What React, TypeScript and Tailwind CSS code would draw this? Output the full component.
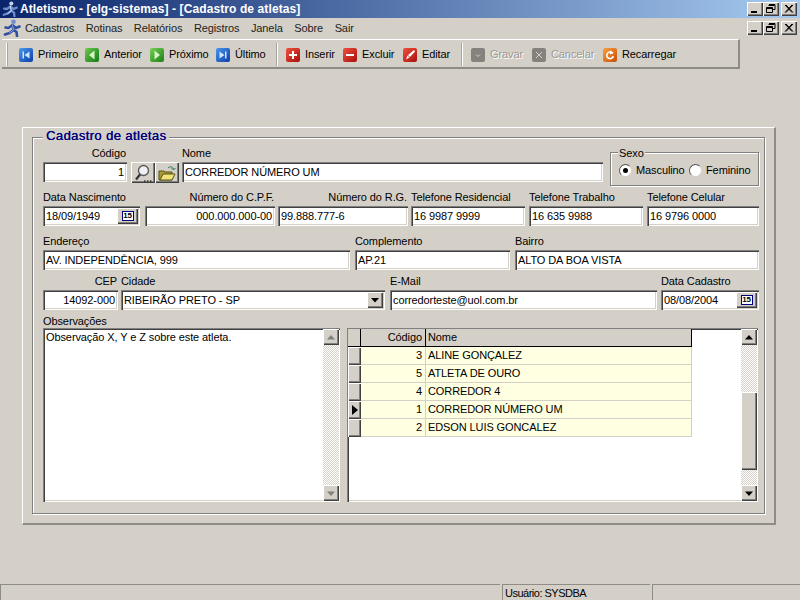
import type { ReactNode } from "react";

const sunken =
  "bg-white shadow-[inset_1px_1px_0_#808080,inset_2px_2px_0_#404040,inset_-1px_-1px_0_#ffffff,inset_-2px_-2px_0_#d4d0c8]";
const raised =
  "bg-[#d4d0c8] shadow-[inset_1px_1px_0_#ffffff,inset_-1px_-1px_0_#404040,inset_-2px_-2px_0_#808080]";
const etched = "border border-[#808080] shadow-[1px_1px_0_#ffffff,inset_1px_1px_0_#ffffff]";

function Runner({ className, light }: { className: string; light?: boolean }) {
  return (
    <svg viewBox="0 0 18 18" className={className}>
      <path d="M9.500 6 5.500 9 2.500 8.500M9.500 6l1 5-4 3-4.500 1.500M10.500 11l3 2 .5 4M10 6.500l3 2.500 3.500-1.500" fill="none" stroke={light ? "#6f8ccb" : "#2f4f9e"} strokeWidth="2.600" strokeLinecap="round" />
      <path d="M9.500 6l1 5-4 3" fill="none" stroke={light ? "#dbe4f4" : "#8ea6d8"} strokeWidth="1" strokeLinecap="round" />
      <circle cx="10.500" cy="2.800" r="2.300" fill={light ? "#c4d2ec" : "#6f8ccb"} />
    </svg>
  );
}

function WinBtn({ kind }: { kind: "min" | "max" | "close" }) {
  return (
    <div className={`w-4 h-3.5 flex items-center justify-center ${raised}`}>
      <svg viewBox="0 0 12 10" className="w-3 h-2.5">
        {kind === "min" && <rect x="2" y="7" width="6" height="2" fill="#000" />}
        {kind === "max" && (
          <path d="M4 .5h6v5H8M3.500 1.500h6M1.500 3.500h6v5h-6zM1.500 4.500h6" fill="none" stroke="#000" />
        )}
        {kind === "close" && <path d="M2 1l7 7.500M3 1l7 7.500M9 1 2 8.500M10 1 3 8.500" stroke="#000" />}
      </svg>
    </div>
  );
}

type ToolIcon = "first" | "prev" | "next" | "last" | "plus" | "minus" | "edit" | "save" | "cancel" | "reload";

const iconColors: Record<ToolIcon, string> = {
  first: "bg-[linear-gradient(135deg,#4a98ec,#0a3ea8)]",
  prev: "bg-[linear-gradient(135deg,#6cc850,#137a16)]",
  next: "bg-[linear-gradient(135deg,#78cf54,#1b8018)]",
  last: "bg-[linear-gradient(135deg,#4a98ec,#0a3ea8)]",
  plus: "bg-[linear-gradient(135deg,#f0503e,#a80f0c)]",
  minus: "bg-[linear-gradient(135deg,#f0503e,#a80f0c)]",
  edit: "bg-[linear-gradient(135deg,#f0503e,#a80f0c)]",
  save: "bg-[#85827e]",
  cancel: "bg-[#85827e]",
  reload: "bg-[linear-gradient(135deg,#f8a040,#c94e08)]",
};

function IconGlyph({ icon }: { icon: ToolIcon }) {
  switch (icon) {
    case "first":
      return <path d="M3.500 3.500h1.500v7H3.500zM10.500 3.500v7L5.500 7z" fill="#cfe4fb" />;
    case "prev":
      return <path d="M9.500 2.500v9L4 7z" fill="#d8f5c8" />;
    case "next":
      return <path d="M4.500 2.500v9L10 7z" fill="#d8f5c8" />;
    case "last":
      return <path d="M10.500 3.500H9v7h1.500zM3.500 3.500v7L8.500 7z" fill="#cfe4fb" />;
    case "plus":
      return <path d="M6 3h2v3h3v2H8v3H6V8H3V6h3z" fill="#fff" />;
    case "minus":
      return <path d="M3 6h8v2H3z" fill="#fff" />;
    case "edit":
      return <path d="M11 2 12 3.500 7 9 5 7zM4.500 7.500l2 2-3.500 2z" fill="#fff" />;
    case "save":
      return <path d="M5 6.500 7 8.500 9 6.500" fill="none" stroke="#d4d0c8" />;
    case "cancel":
      return <path d="M4 4l6 6M10 4l-6 6" stroke="#d4d0c8" />;
    case "reload":
      return (
        <>
          <path d="M9.800 5.500A3.300 3.300 0 1 0 10.300 8" fill="none" stroke="#fff" strokeWidth="1.600" />
          <path d="M7 2.500l3.500 2.300-3.500 1.700z" fill="#fff" />
        </>
      );
  }
}

function ToolButton({ icon, label, width, disabled }: { icon: ToolIcon; label: string; width: string; disabled?: boolean }) {
  return (
    <div className={`flex items-center gap-[5px] shrink-0 ${width}`}>
      <div className={`w-[14px] h-[14px] rounded-[2px] ${iconColors[icon]}`}>
        <svg viewBox="0 0 14 14" className="w-[14px] h-[14px]">
          <IconGlyph icon={icon} />
        </svg>
      </div>
      <span className={disabled ? "text-[#9b9892] [text-shadow:1px_1px_0_#ffffff]" : "text-black"}>{label}</span>
    </div>
  );
}

function Sep() {
  return <div className="w-[2px] h-[23px] mr-[8px] bg-[#a8a59e] border-r border-white shrink-0" />;
}

function Field({ label, value, width, alignRight, labelRight, children }: {
  label?: string;
  value: string;
  width: string;
  alignRight?: boolean;
  labelRight?: boolean;
  children?: ReactNode;
}) {
  return (
    <div className={`flex flex-col shrink-0 ${width}`}>
      <div className={`h-4 leading-[14px] whitespace-nowrap ${labelRight ? "text-right pr-px" : ""}`}>{label}</div>
      <div className={`h-5 flex items-center pl-[3px] pr-[3px] ${sunken}`}>
        <span className={`flex-1 whitespace-nowrap overflow-hidden ${alignRight ? "text-right" : ""}`}>{value}</span>
        {children}
      </div>
    </div>
  );
}

function CalButton() {
  return (
    <div className={`w-[21px] h-4 -mr-[1px] flex items-center justify-center shrink-0 ${raised}`}>
      <div className="w-[12px] h-[10px] border border-[#000080] bg-white text-[8px] leading-[8px] text-center font-bold">15</div>
    </div>
  );
}

function ScrollArrow({ up, dim }: { up?: boolean; dim?: boolean }) {
  return (
    <div className={`w-4 h-4 shrink-0 flex items-center justify-center ${raised}`}>
      <svg viewBox="0 0 8 5" className="w-2 h-[5px]">
        <path d={up ? "M4 0 8 4.500H0z" : "M4 5 8 .5H0z"} fill={dim ? "#808080" : "#000"} />
      </svg>
    </div>
  );
}

const dither =
  "bg-[#e8e6e2] bg-[repeating-conic-gradient(#d4d0c8_0_25%,#ffffff_0_50%)] bg-[length:2px_2px]";

const rows = [
  { code: 3, name: "ALINE GONÇALEZ" },
  { code: 5, name: "ATLETA DE OURO" },
  { code: 4, name: "CORREDOR 4" },
  { code: 1, name: "CORREDOR NÚMERO UM", current: true },
  { code: 2, name: "EDSON LUIS GONCALEZ" },
];

export default function App() {
  return (
    <div className="w-[800px] h-[600px] overflow-hidden flex flex-col bg-[#d4d0c8] text-black text-[11px] tracking-[-0.1px] font-['Liberation_Sans',Arial,sans-serif]">
      {/* title bar */}
      <div className="h-[18px] shrink-0 flex items-center bg-[linear-gradient(90deg,#0a246a,#a6caf0)] pr-[3px]">
        <Runner className="w-4 h-4 ml-[2px] mr-[2px]" light />
        <span className="text-white font-bold text-[12px] tracking-[0.1px] flex-1">
          Atletismo - [elg-sistemas] - [Cadastro de atletas]
        </span>
        <WinBtn kind="min" />
        <WinBtn kind="max" />
        <div className="w-[2px]" />
        <WinBtn kind="close" />
      </div>

      {/* menu */}
      <div className="h-[20px] shrink-0 flex items-center pr-[3px]">
        <Runner className="w-[18px] h-[18px] ml-[3px] mr-[4px]" />
        <div className="flex-1 flex gap-[11.500px] text-[#222]">
          <span>Cadastros</span>
          <span>Rotinas</span>
          <span>Relatórios</span>
          <span>Registros</span>
          <span>Janela</span>
          <span>Sobre</span>
          <span>Sair</span>
        </div>
        <WinBtn kind="min" />
        <WinBtn kind="max" />
        <div className="w-[2px]" />
        <WinBtn kind="close" />
      </div>

      {/* toolbar */}
      <div className="mt-px ml-[2px] w-[738px] h-[30px] shrink-0 flex items-center pl-[4px] pt-[2px] border-t border-white border-b-2 border-r-2 border-b-[#8f8c85] border-r-[#8f8c85]">
        <div className="w-[2px] h-[23px] mr-[11px] bg-white border-r border-[#a8a59e] shrink-0" />
        <ToolButton icon="first" label="Primeiro" width="w-[66px]" />
        <ToolButton icon="prev" label="Anterior" width="w-[65px]" />
        <ToolButton icon="next" label="Próximo" width="w-[66px]" />
        <ToolButton icon="last" label="Último" width="w-[60px]" />
        <Sep />
        <ToolButton icon="plus" label="Inserir" width="w-[57px]" />
        <ToolButton icon="minus" label="Excluir" width="w-[60px]" />
        <ToolButton icon="edit" label="Editar" width="w-[58px]" />
        <Sep />
        <ToolButton icon="save" label="Gravar" width="w-[61px]" disabled />
        <ToolButton icon="cancel" label="Cancelar" width="w-[71px]" disabled />
        <ToolButton icon="reload" label="Recarregar" width="w-[80px]" />
      </div>

      {/* form panel */}
      <div className="mt-[58px] ml-[22px] w-[754px] h-[398px] shrink-0 p-[9px] border-t border-l border-white border-r-2 border-b-2 border-r-[#8f8c85] border-b-[#8f8c85]">
        <div className={`relative h-[377px] pl-[10px] pt-[8px] ${etched}`}>
          <span className="absolute -top-[10px] left-[10px] px-[3px] bg-[#d4d0c8] text-[#000080] text-[13px] leading-[16px] tracking-[0.4px] [text-shadow:0.3px_0_0_#000080]">
            Cadastro de atletas
          </span>

          {/* row 1 */}
          <div className="flex h-9">
            <Field label="Código" value="1" width="w-[84px]" alignRight labelRight />
            <div className="ml-[4px] mt-4 flex shrink-0">
              <div className={`w-6 h-[21px] flex items-center justify-center ${raised}`}>
                <svg viewBox="0 0 20 18" className="w-5 h-[18px]">
                  <circle cx="10.500" cy="6.500" r="5" fill="#eef2f6" stroke="#555" strokeWidth="1.300" />
                  <path d="M7 10.500 3 15.500" stroke="#333" strokeWidth="2.200" />
                  <path d="M11 17h1.500M14 17h1.500M17 17h1.500" stroke="#000" />
                </svg>
              </div>
              <div className={`w-6 h-[21px] flex items-center justify-center ${raised}`}>
                <svg viewBox="0 0 20 18" className="w-5 h-[18px]">
                  <path d="M2 7h5l1 1h7v8H2z" fill="#a89a3c" stroke="#5a5214" />
                  <path d="M3 16l3-6h12l-3 6z" fill="#f0e27a" stroke="#5a5214" />
                  <path d="M11 4c2.500-2 5-1.500 5.500 1.500M14.500 4l2 2 2-2" fill="none" stroke="#2c7a5a" />
                </svg>
              </div>
            </div>
            <div className="ml-[3px]">
              <Field label="Nome" value="CORREDOR NÚMERO UM" width="w-[421px]" />
            </div>
            {/* sexo group */}
            <div className={`ml-[7px] mt-[6px] w-[149px] h-[34px] shrink-0 relative ${etched}`}>
              <span className="absolute -top-[6px] left-[7px] px-px leading-[12px] bg-[#d4d0c8]">Sexo</span>
              <div className="h-full flex items-center pl-[8px] pt-[3px]">
                <div className="w-[13px] h-[13px] rounded-full bg-white border border-[#555] border-r-[#d4d0c8] border-b-[#d4d0c8] flex items-center justify-center">
                  <div className="w-[5px] h-[5px] rounded-full bg-black" />
                </div>
                <span className="ml-[4px] w-[47px] whitespace-nowrap">Masculino</span>
                <div className="ml-[6px] w-[13px] h-[13px] rounded-full bg-white border border-[#555] border-r-[#d4d0c8] border-b-[#d4d0c8]" />
                <span className="ml-[4px]">Feminino</span>
              </div>
            </div>
          </div>

          {/* row 2 */}
          <div className="flex mt-2">
            <Field label="Data Nascimento" value="18/09/1949" width="w-[97px]">
              <CalButton />
            </Field>
            <div className="ml-[5px]">
              <Field label="Número do C.P.F." value="000.000.000-00" width="w-[130px]" alignRight labelRight />
            </div>
            <div className="ml-[3px]">
              <Field label="Número do R.G." value="99.888.777-6" width="w-[130px]" labelRight />
            </div>
            <div className="ml-[3px]">
              <Field label="Telefone Residencial" value="16 9987 9999" width="w-[114px]" />
            </div>
            <div className="ml-[4px]">
              <Field label="Telefone Trabalho" value="16 635 9988" width="w-[114px]" />
            </div>
            <div className="ml-[4px]">
              <Field label="Telefone Celular" value="16 9796 0000" width="w-[112px]" />
            </div>
          </div>

          {/* row 3 */}
          <div className="flex mt-2">
            <Field label="Endereço" value="AV. INDEPENDÊNCIA, 999" width="w-[307px]" />
            <div className="ml-[5px]">
              <Field label="Complemento" value="AP.21" width="w-[155px]" />
            </div>
            <div className="ml-[5px]">
              <Field label="Bairro" value="ALTO DA BOA VISTA" width="w-[244px]" />
            </div>
          </div>

          {/* row 4 */}
          <div className="flex mt-1">
            <Field label="CEP" value="14092-000" width="w-[75px]" alignRight labelRight />
            <div className="ml-[3px]">
              <Field label="Cidade" value="RIBEIRÃO PRETO - SP" width="w-[264px]">
                <div className={`w-4 h-4 -mr-[1px] flex items-center justify-center shrink-0 ${raised}`}>
                  <svg viewBox="0 0 8 5" className="w-2 h-[5px]">
                    <path d="M4 4.500 8 0H0z" fill="#000" />
                  </svg>
                </div>
              </Field>
            </div>
            <div className="ml-[5px]">
              <Field label="E-Mail" value="corredorteste@uol.com.br" width="w-[267px]" />
            </div>
            <div className="ml-[4px]">
              <Field label="Data Cadastro" value="08/08/2004" width="w-[98px]">
                <CalButton />
              </Field>
            </div>
          </div>

          {/* row 5 */}
          <div className="h-3.5 leading-[14px] mt-1">Observações</div>
          <div className="flex gap-[7px]">
            <div className={`w-[297px] h-[174px] shrink-0 flex py-px pr-px ${sunken}`}>
              <div className="flex-1 pl-[3px] pt-[2px] leading-[13px]">Observação X, Y e Z sobre este atleta.</div>
              <div className="w-4 flex flex-col">
                <ScrollArrow up dim />
                <div className={`flex-1 ${dither}`} />
                <ScrollArrow dim />
              </div>
            </div>
            <div className={`w-[411px] h-[174px] shrink-0 flex py-px pl-px pr-px ${sunken}`}>
              <div className="flex-1">
                <div className="flex h-[18px]">
                  <div className="w-[13px] bg-[#d4d0c8] border-r border-b border-black" />
                  <div className="w-[65px] text-right pr-[3px] leading-[17px] border-r border-b border-black bg-[#d4d0c8]">Código</div>
                  <div className="w-[266px] pl-[2px] leading-[17px] border-r border-b border-black bg-[#d4d0c8]">Nome</div>
                </div>
                {rows.map(row => (
                  <div key={row.code} className="flex h-[18px]">
                    <div className={`w-[13px] flex items-center justify-center ${raised}`}>
                      {row.current && (
                        <svg viewBox="0 0 6 10" className="w-[6px] h-[10px]">
                          <path d="M0 0 6 5 0 10z" fill="#000" />
                        </svg>
                      )}
                    </div>
                    <div className="w-[65px] text-right pr-[3px] leading-[17px] bg-[#ffffe1] border-b border-r border-[#d4d0c8]">{row.code}</div>
                    <div className="w-[266px] pl-[2px] leading-[17px] bg-[#ffffe1] border-b border-r border-[#d4d0c8]">{row.name}</div>
                  </div>
                ))}
              </div>
              <div className="w-4 flex flex-col">
                <ScrollArrow up />
                <div className={`h-[47px] ${dither}`} />
                <div className={`h-[78px] ${raised}`} />
                <div className={`flex-1 ${dither}`} />
                <ScrollArrow />
              </div>
            </div>
          </div>
        </div>
      </div>

      {/* status bar */}
      <div className="mt-auto h-4 shrink-0 flex items-stretch gap-[2px]">
        <div className="w-[500px] border-t border-l border-[#8f8c85] border-r-white" />
        <div className="w-[148px] pl-[2px] leading-[16px] tracking-[-0.5px] border-t border-l border-[#8f8c85] whitespace-nowrap">Usuário: SYSDBA</div>
        <div className="flex-1 border-t border-l border-[#8f8c85]" />
      </div>
    </div>
  );
}
